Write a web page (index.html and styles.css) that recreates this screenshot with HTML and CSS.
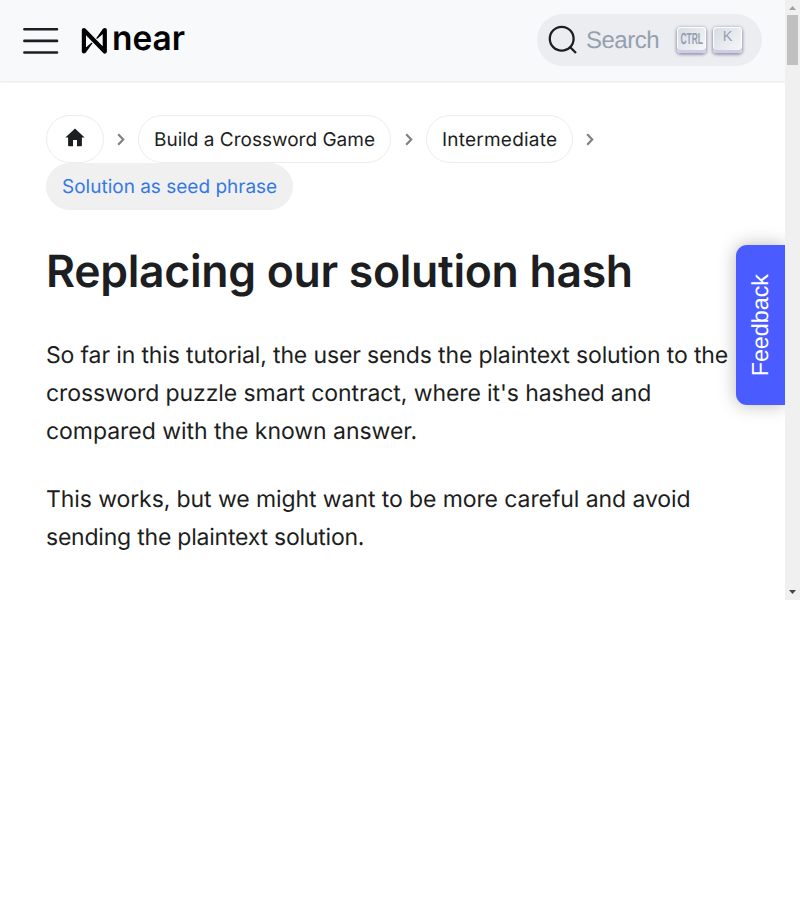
FILE: index.html
```html
<!DOCTYPE html>
<html lang="en">
<head>
<meta charset="utf-8">
<title>Replacing our solution hash</title>
<link rel="stylesheet" href="styles.css">
</head>
<body>
<div class="viewport">
  <div class="page">
    <header class="navbar">
      <svg class="menu" width="36" height="28" viewBox="0 0 36 28"><path d="M1.4 2.2H34M1.4 13.9H34M1.4 25.5H34" fill="none" stroke="#1c1e21" stroke-width="2.6" stroke-linecap="round"/></svg>
      <svg class="logo" width="106" height="40" viewBox="0 0 106 40">
        <g transform="translate(.2 1.500)">
          <path d="M2.700 29V7.500L23.600 29V7.500" fill="none" stroke="#000" stroke-width="4.200" stroke-linejoin="round" stroke-linecap="round"/>
          <path d="M21.800 6.300 15 15.800l.8.700L24 9.500ZM4.500 30.200 11.300 20.700l-.8-.700L2.300 27Z"/>
        </g>
        <text class="wordmark" x="31" y="29.300" textLength="73" lengthAdjust="spacingAndGlyphs">near</text>
      </svg>
      <div class="search">
        <svg width="30" height="30" viewBox="0 0 30 30"><circle cx="13.700" cy="13.700" r="11.900" fill="none" stroke="#1c1e21" stroke-width="2.300"/><path d="m22 22 6 6" stroke="#1c1e21" stroke-width="2.300"/></svg>
        <span class="search-label">Search</span>
        <span class="key"><svg width="28" height="24" viewBox="0 0 28 24"><text class="ctrl" x="2.500" y="17.300" textLength="22.500" lengthAdjust="spacingAndGlyphs">CTRL</text></svg></span>
        <span class="key key-k">K</span>
      </div>
    </header>
    <main>
      <nav class="crumbs">
        <a class="crumb"><svg class="home" width="20" height="19" viewBox="0 0 20 19"><path d="M10 .4 19.600 9.400H16.900V17.500Q16.900 18.300 16.100 18.300H12V12H8V18.300H3.900Q3.100 18.300 3.100 17.500V9.400H.4Z"/></svg></a>
        <svg class="sep" width="8" height="13" viewBox="0 0 8 13"><path d="m1.200 1.300 5 5.200-5 5.200"/></svg>
        <a class="crumb">Build a Crossword Game</a>
        <svg class="sep wide" width="8" height="13" viewBox="0 0 8 13"><path d="m1.200 1.300 5 5.200-5 5.200"/></svg>
        <a class="crumb spaced">Intermediate</a>
        <svg class="sep" width="8" height="13" viewBox="0 0 8 13"><path d="m1.200 1.300 5 5.200-5 5.200"/></svg>
        <a class="crumb active">Solution as seed phrase</a>
      </nav>
      <h1>Replacing our solution hash</h1>
      <p><span class="tight">So far in this tutorial, the user sends the plaintext solution to the</span><br><span class="snug">crossword puzzle smart contract, where it's hashed and</span><br><span class="slight">compared with the known answer.</span></p>
      <p><span class="snug">This works, but we might want to be more careful and avoid</span><br><span class="tighter">sending the plaintext solution.</span></p>
    </main>
    <div class="feedback"><span>Feedback</span></div>
  </div>
  <div class="scrollbar">
    <svg width="15" height="15" viewBox="0 0 15 15"><path d="M4 10h7L7.500 6Z" fill="#a0a0a0"/></svg>
    <div class="thumb"></div>
    <svg class="down" width="15" height="15" viewBox="0 0 15 15"><path d="M4 5h7L7.500 9Z" fill="#454545"/></svg>
  </div>
</div>
</body>
</html>
```
FILE: styles.css
```css
* { box-sizing: border-box; }
body { margin: 0; background: #fff; color: #1c1e21; font-family: Inter, sans-serif; text-rendering: geometricPrecision; }
.viewport { display: flex; height: 600px; }
.page { position: relative; width: 785px; overflow: hidden; }
.navbar { display: flex; align-items: center; height: 81px; padding: 0 23px; background: #f7f9fb; box-shadow: 0 1px 2px rgba(0, 0, 0, .1); }
.logo { margin: 0 0 0 22px; overflow: visible; }
.wordmark { font: 600 34px Inter, sans-serif; }
.search { display: flex; align-items: center; width: 225px; height: 52px; margin: -1px 0 0 auto; padding-left: 11px; border-radius: 26px; background: #ebedf0; color: #969faf; }
.search-label { width: 99px; padding: 1px 0 0 8px; font: 24px/30px "Liberation Sans", sans-serif; letter-spacing: -.5px; }
.key { display: flex; align-items: center; justify-content: center; width: 29px; height: 26px; margin-right: 7px; padding-bottom: 2px; border-radius: 4px; background: linear-gradient(-225deg, #d5dbe4, #f8f8f8); box-shadow: inset 0 -3px 0 #cdcde6, inset 0 0 1px 1px #fff, 0 1px 3px 1px rgba(30, 35, 90, .4); }
.key svg { overflow: visible; flex: none; }
.ctrl { font: bold 16px "Liberation Sans", sans-serif; fill: #969faf; }
.key-k { margin-right: 0; font: 14.500px "Liberation Sans", sans-serif; padding-bottom: 6px; }
main { padding: 34px 46px 0; }
.crumbs { display: flex; flex-wrap: wrap; align-items: center; }
.crumb { display: flex; align-items: center; height: 48px; padding: 0 15px; border: 1px solid #ededed; border-radius: 24px; font-size: 19px; white-space: nowrap; }
.spaced { letter-spacing: .22px; }
.home { margin: 0 3px 4px; fill: #1c1e21; }
.sep { margin: 1px 13px 0 13px; fill: none; stroke: #808080; stroke-width: 2.200; }
.wide { margin-left: 14px; }
.active { height: 47px; border-color: #f0f0f0; background: #f0f0f0; color: #3578e5; }
h1 { margin: 33px 0 37px; font-size: 44.500px; font-weight: 600; line-height: 56px; letter-spacing: -.29px; white-space: nowrap; }
p { margin: 0 0 30px; font-size: 23px; line-height: 38px; white-space: nowrap; }
.tight { letter-spacing: -.14px; }
.snug { letter-spacing: -.09px; }
.slight { letter-spacing: -.04px; }
.tighter { letter-spacing: -.22px; }
.feedback { position: absolute; top: 245px; right: 0; display: flex; align-items: center; justify-content: center; width: 49px; height: 160px; padding-right: 1px; border-radius: 11px 0 0 11px; background: #4a5cff; color: #fff; box-shadow: 0 0 18px rgba(0, 0, 0, .28); }
.feedback span { writing-mode: vertical-rl; transform: rotate(180deg); font: 23.300px "Liberation Sans", sans-serif; }
.scrollbar { display: flex; flex-direction: column; align-items: center; width: 15px; background: #f0f0f0; }
.thumb { width: 11px; height: 50px; background: #c0c0c0; }
.down { margin-top: auto; }
```
